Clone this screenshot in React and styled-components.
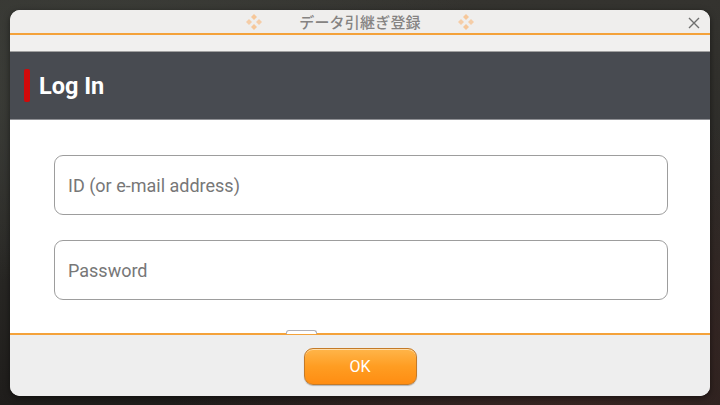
import React from 'react';
import styled, { createGlobalStyle } from 'styled-components';

const GlobalStyle = createGlobalStyle`
  html, body {
    margin: 0;
    padding: 0;
    background: #262521;
  }
  * {
    box-sizing: border-box;
  }
`;

const Screen = styled.div`
  width: 720px;
  height: 405px;
  padding: 10px 10px 9px 10px;
  overflow: hidden;
  background:
    radial-gradient(ellipse at 15% 20%, #3d3f3a 0%, transparent 45%),
    radial-gradient(ellipse at 80% 90%, #3a2623 0%, transparent 50%),
    linear-gradient(180deg, #34332f 0%, #2a2926 60%, #1f1d1b 100%);
  font-family: Roboto, 'Noto Sans', sans-serif;
`;

const Dialog = styled.div`
  width: 700px;
  height: 386px;
  display: flex;
  flex-direction: column;
  border-radius: 10px;
  overflow: hidden;
  background: #fff;
  box-shadow: 0 2px 6px rgba(0, 0, 0, 0.5);
`;

const TitleBar = styled.div`
  height: 25px;
  flex: none;
  display: flex;
  align-items: center;
  justify-content: center;
  gap: 36px;
  position: relative;
  background: #efeeed;
  border-bottom: 2px solid #f4a23a;
`;

const Title = styled.div`
  font-family: 'Noto Sans CJK JP', 'Noto Sans', sans-serif;
  font-size: 15px;
  font-weight: 500;
  color: #858382;
  letter-spacing: 0.2px;
  line-height: 1;
`;

const CloseButton = styled.button`
  position: absolute;
  right: 6px;
  top: 3px;
  width: 20px;
  height: 20px;
  padding: 0;
  border: none;
  background: none;
  display: flex;
  align-items: center;
  justify-content: center;
`;

const Strip = styled.div`
  height: 17px;
  flex: none;
  background: #f1f0ef;
  border-bottom: 1px solid #a0a0a0;
`;

const Header = styled.div`
  height: 68px;
  flex: none;
  display: flex;
  align-items: center;
  gap: 9px;
  padding-left: 14px;
  background: #484b51;
  border-bottom: 1px solid #8f9094;
`;

const Accent = styled.span`
  width: 6px;
  height: 33px;
  border-radius: 2px;
  background: #d10a0a;
`;

const Heading = styled.h1`
  margin: 0;
  font-family: Roboto, sans-serif;
  font-size: 23.5px;
  font-weight: 700;
  color: #fff;
`;

const Body = styled.div`
  flex: 1;
  position: relative;
  display: flex;
  flex-direction: column;
  gap: 25px;
  padding: 35px 42px 0 44px;
  background: #fff;
  border-bottom: 2px solid #f4a23a;
`;

const Field = styled.input`
  height: 60px;
  width: 100%;
  padding: 0 13px;
  border: 1px solid #9d9d9d;
  border-radius: 9px;
  background: #fff;
  font-family: Roboto, sans-serif;
  font-size: 18px;
  color: #444;
  outline: none;

  &::placeholder {
    color: #777;
  }
`;

const Tab = styled.span`
  position: absolute;
  left: 276px;
  bottom: -1px;
  width: 31px;
  height: 4px;
  border: 1px solid #b0b0b8;
  border-bottom: none;
  border-radius: 3px 3px 0 0;
  background: #fff;
`;

const Footer = styled.div`
  height: 61px;
  flex: none;
  display: flex;
  justify-content: center;
  padding-top: 13px;
  background: #eeeeee;
`;

const OkButton = styled.button`
  width: 113px;
  height: 37px;
  border: 1px solid #c47a28;
  border-radius: 9px;
  background: linear-gradient(180deg, #ffb54a 0%, #ff9d22 50%, #ff8d12 100%);
  box-shadow: inset 0 1px 0 rgba(255, 230, 190, 0.8), 0 1px 1px rgba(0, 0, 0, 0.25);
  font-family: Roboto, sans-serif;
  font-size: 16px;
  color: #fff;
  padding: 0;
`;

const Ornament = () => (
  <svg width="18" height="18" viewBox="0 0 18 18">
    <g fill="#f6c79a">
      <path d="M9 1 L12 4 L9 7 L6 4 Z" />
      <path d="M4 6 L7 9 L4 12 L1 9 Z" opacity="0.85" />
      <path d="M14 6 L17 9 L14 12 L11 9 Z" opacity="0.85" />
      <path d="M9 11 L12 14 L9 17 L6 14 Z" />
    </g>
  </svg>
);

const App = () => (
  <>
    <GlobalStyle />
    <Screen>
      <Dialog>
        <TitleBar>
          <Ornament />
          <Title>データ引継ぎ登録</Title>
          <Ornament />
          <CloseButton aria-label="close">
            <svg width="12" height="12" viewBox="0 0 12 12">
              <path d="M1 1 L11 11 M11 1 L1 11" stroke="#6f6f6f" strokeWidth="1.4" />
            </svg>
          </CloseButton>
        </TitleBar>
        <Strip />
        <Header>
          <Accent />
          <Heading>Log In</Heading>
        </Header>
        <Body>
          <Field placeholder="ID (or e-mail address)" />
          <Field type="password" placeholder="Password" />
          <Tab />
        </Body>
        <Footer>
          <OkButton>OK</OkButton>
        </Footer>
      </Dialog>
    </Screen>
  </>
);

export default App;
